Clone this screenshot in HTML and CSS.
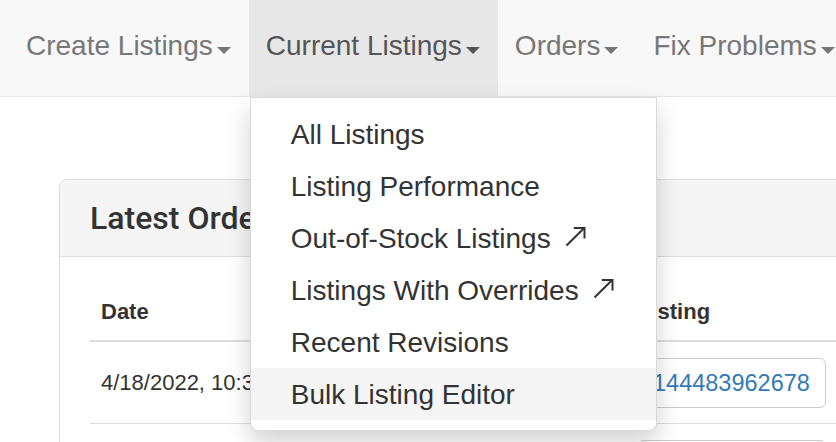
FILE: index.html
```html
<!DOCTYPE html>
<html lang="en">
<head>
<meta charset="utf-8">
<title>Listings</title>
<link rel="stylesheet" href="styles.css">
</head>
<body>
<nav class="navbar">
  <ul class="nav">
    <li class="nav-item"><a class="nav-link" href="#">Create Listings<span class="caret"></span></a></li>
    <li class="nav-item open">
      <a class="nav-link active" href="#">Current Listings<span class="caret"></span></a>
      <ul class="dropdown">
        <li><a href="#">All Listings</a></li>
        <li><a href="#">Listing Performance</a></li>
        <li><a href="#">Out-of-Stock Listings<svg class="ext-icon" viewBox="0 0 21 20" width="21" height="20" aria-hidden="true"><path d="M1.5 18.5 L19.2 1.0" fill="none" stroke="#333" stroke-width="2"/><path d="M8.8 1.0 H19.5 V11.5" fill="none" stroke="#333" stroke-width="2"/></svg></a></li>
        <li><a href="#">Listings With Overrides<svg class="ext-icon" viewBox="0 0 21 20" width="21" height="20" aria-hidden="true"><path d="M1.5 18.5 L19.2 1.0" fill="none" stroke="#333" stroke-width="2"/><path d="M8.8 1.0 H19.5 V11.5" fill="none" stroke="#333" stroke-width="2"/></svg></a></li>
        <li><a href="#">Recent Revisions</a></li>
        <li class="hover"><a href="#">Bulk Listing Editor</a></li>
      </ul>
    </li>
    <li class="nav-item"><a class="nav-link" href="#">Orders<span class="caret"></span></a></li>
    <li class="nav-item"><a class="nav-link" href="#">Fix Problems<span class="caret"></span></a></li>
  </ul>
</nav>
<main class="content">
  <section class="panel">
    <div class="panel-heading"><h3 class="panel-title">Latest Orders</h3></div>
    <div class="panel-body">
      <table class="orders">
        <colgroup>
          <col class="col-date"><col class="col-order"><col class="col-listing">
        </colgroup>
        <thead>
          <tr><th>Date</th><th></th><th>Listing</th></tr>
        </thead>
        <tbody>
          <tr>
            <td>4/18/2022, 10:32 AM</td>
            <td></td>
            <td><span class="listing-box"><a href="#">144483962678</a></span></td>
          </tr>
          <tr>
            <td></td>
            <td></td>
            <td><span class="listing-box listing-box-empty"></span></td>
          </tr>
        </tbody>
      </table>
    </div>
  </section>
</main>
</body>
</html>
```
FILE: styles.css
```css
html, body {
  margin: 0;
  padding: 0;
}
body {
  width: 836px;
  height: 442px;
  overflow: hidden;
  background: #fff;
  font-family: "Liberation Sans", Arial, sans-serif;
  color: #333;
}
a {
  text-decoration: none;
}

.navbar {
  background: #f8f8f8;
  border-bottom: 1px solid #e7e7e7;
  height: 96px;
}
.nav {
  display: flex;
  margin: 0;
  padding: 0 0 0 9px;
  list-style: none;
  white-space: nowrap;
}
.nav-item {
  position: relative;
}
.nav-link {
  display: block;
  padding: 26px 18px 30px 17px;
  line-height: 40px;
  font-size: 28px;
  color: #777;
}
.nav-link.active {
  background: #e7e7e7;
  color: #555;
}
.caret {
  display: inline-block;
  width: 0;
  height: 0;
  margin-left: 4px;
  margin-bottom: 1px;
  vertical-align: baseline;
  border-top: 7px solid currentColor;
  border-left: 7px solid transparent;
  border-right: 7px solid transparent;
}

.dropdown {
  position: absolute;
  top: calc(100% + 1px);
  left: 1px;
  z-index: 10;
  box-sizing: border-box;
  width: 407px;
  margin: 0;
  padding: 10px 0;
  list-style: none;
  background: #fff;
  border: 1px solid rgba(0, 0, 0, 0.15);
  border-radius: 0 0 8px 8px;
  box-shadow: 0 12px 24px rgba(0, 0, 0, 0.175);
}
.dropdown a {
  display: block;
  padding: 7px 40px 5px;
  line-height: 40px;
  font-size: 28px;
  color: #333;
  white-space: nowrap;
}
.dropdown .hover a {
  background: #f5f5f5;
}
.ext-icon {
  margin-left: 14px;
  vertical-align: 1px;
}

.content {
  padding: 82px 0 0 59px;
}
.panel {
  width: 900px;
  border: 1px solid #ddd;
  border-radius: 8px 8px 0 0;
  background: #fff;
}
.panel-heading {
  padding: 20px 30px;
  background: #f5f5f5;
  border-bottom: 1px solid #ddd;
  border-radius: 7px 7px 0 0;
}
.panel-title {
  margin: 0;
  font-family: Roboto, "Liberation Sans", sans-serif;
  font-weight: 500;
  font-size: 32px;
  line-height: 36px;
  color: #333;
}
.panel-body {
  padding: 30px;
}

.orders {
  width: 838px;
  table-layout: fixed;
  border-collapse: collapse;
  border-spacing: 0;
}
.col-date { width: 270px; }
.col-order { width: 267px; }
.col-listing { width: 301px; }

.orders th {
  padding: 10px 11px 13px;
  text-align: left;
  font-size: 22px;
  font-weight: bold;
  line-height: 30px;
  border-bottom: 2px solid #ddd;
  white-space: nowrap;
  overflow: hidden;
}
.orders td {
  padding: 16px 11px 15px;
  font-size: 22px;
  line-height: 30px;
  vertical-align: middle;
  border-bottom: 1px solid #ddd;
  white-space: nowrap;
  overflow: hidden;
}
.listing-box {
  display: inline-block;
  padding: 0 15px 0 14px;
  border: 1px solid #ccc;
  border-radius: 6px;
  line-height: 48px;
  font-size: 23.5px;
  vertical-align: middle;
}
.listing-box a {
  color: #337ab7;
}
.listing-box-empty {
  width: 157px;
  height: 48px;
}
```
